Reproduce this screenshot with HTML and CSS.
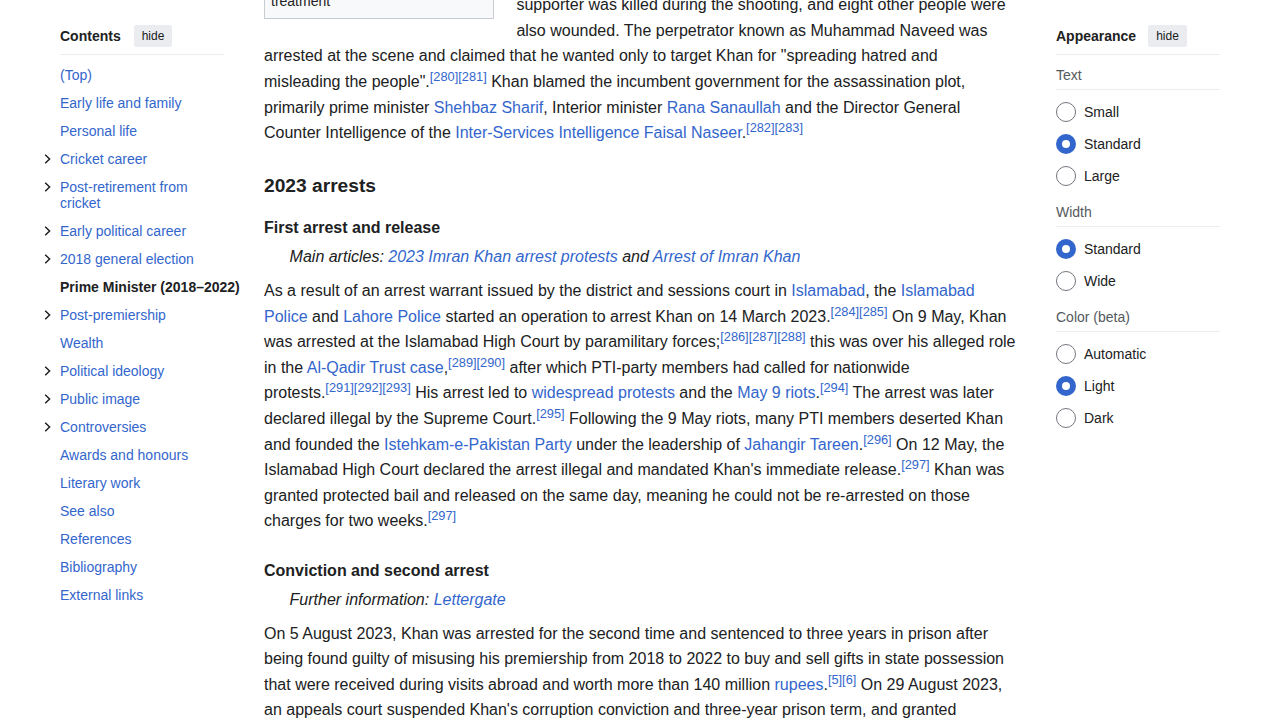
FILE: index.html
```html
<!DOCTYPE html>
<html lang="en">
<head>
<meta charset="utf-8">
<title>Imran Khan - Wikipedia</title>
<link rel="stylesheet" href="styles.css">
</head>
<body>
<div class="page">
  <nav class="toc">
    <div class="panel-head">
      <span class="panel-title">Contents</span>
      <button class="hide-btn">hide</button>
    </div>
    <ul class="toc-list">
      <li class="toc-item"><a href="#">(Top)</a></li>
      <li class="toc-item"><a href="#">Early life and family</a></li>
      <li class="toc-item"><a href="#">Personal life</a></li>
      <li class="toc-item"><span class="toggle"><svg width="8" height="10" viewBox="0 0 8 10"><polyline points="1.2,0.8 5.6,5 1.2,9.2"/></svg></span><a href="#">Cricket career</a></li>
      <li class="toc-item"><span class="toggle"><svg width="8" height="10" viewBox="0 0 8 10"><polyline points="1.2,0.8 5.6,5 1.2,9.2"/></svg></span><a href="#">Post-retirement from cricket</a></li>
      <li class="toc-item"><span class="toggle"><svg width="8" height="10" viewBox="0 0 8 10"><polyline points="1.2,0.8 5.6,5 1.2,9.2"/></svg></span><a href="#">Early political career</a></li>
      <li class="toc-item"><span class="toggle"><svg width="8" height="10" viewBox="0 0 8 10"><polyline points="1.2,0.8 5.6,5 1.2,9.2"/></svg></span><a href="#">2018 general election</a></li>
      <li class="toc-item toc-active"><a href="#">Prime Minister (2018–2022)</a></li>
      <li class="toc-item"><span class="toggle"><svg width="8" height="10" viewBox="0 0 8 10"><polyline points="1.2,0.8 5.6,5 1.2,9.2"/></svg></span><a href="#">Post-premiership</a></li>
      <li class="toc-item"><a href="#">Wealth</a></li>
      <li class="toc-item"><span class="toggle"><svg width="8" height="10" viewBox="0 0 8 10"><polyline points="1.2,0.8 5.6,5 1.2,9.2"/></svg></span><a href="#">Political ideology</a></li>
      <li class="toc-item"><span class="toggle"><svg width="8" height="10" viewBox="0 0 8 10"><polyline points="1.2,0.8 5.6,5 1.2,9.2"/></svg></span><a href="#">Public image</a></li>
      <li class="toc-item"><span class="toggle"><svg width="8" height="10" viewBox="0 0 8 10"><polyline points="1.2,0.8 5.6,5 1.2,9.2"/></svg></span><a href="#">Controversies</a></li>
      <li class="toc-item"><a href="#">Awards and honours</a></li>
      <li class="toc-item"><a href="#">Literary work</a></li>
      <li class="toc-item"><a href="#">See also</a></li>
      <li class="toc-item"><a href="#">References</a></li>
      <li class="toc-item"><a href="#">Bibliography</a></li>
      <li class="toc-item"><a href="#">External links</a></li>
    </ul>
  </nav>

  <main class="content">
    <div class="thumb">
      <div class="thumbcaption">Khan being taken to hospital for treatment</div>
    </div>
    <p>supporter was killed during the shooting, and eight other people were also wounded. The perpetrator known as Muhammad Naveed was arrested at the scene and claimed that he wanted only to target Khan for "spreading hatred and misleading the <span class="nb">people".<sup class="ref">[280]</sup><sup class="ref">[281]</sup></span> Khan blamed the incumbent government for the assassination plot, primarily prime minister <a href="#">Shehbaz Sharif</a>, Interior minister <a href="#">Rana Sanaullah</a> and the Director General Counter Intelligence of the <a href="#">Inter-Services Intelligence</a> <a href="#">Faisal</a> <span class="nb"><a href="#">Naseer</a>.<sup class="ref">[282]</sup><sup class="ref">[283]</sup></span></p>

    <h3 class="h3">2023 arrests</h3>
    <h4 class="h4">First arrest and release</h4>
    <div class="hatnote">Main articles: <a href="#">2023 Imran Khan arrest protests</a> and <a href="#">Arrest of Imran Khan</a></div>
    <p>As a result of an arrest warrant issued by the district and sessions court in <a href="#">Islamabad</a>, the <a href="#">Islamabad Police</a> and <a href="#">Lahore Police</a> started an operation to arrest Khan on 14 March <span class="nb">2023.<sup class="ref">[284]</sup><sup class="ref">[285]</sup></span> On 9 May, Khan was arrested at the Islamabad High Court by paramilitary <span class="nb">forces;<sup class="ref">[286]</sup><sup class="ref">[287]</sup><sup class="ref">[288]</sup></span> this was over his alleged role in the <a href="#">Al-Qadir Trust</a> <span class="nb"><a href="#">case</a>,<sup class="ref">[289]</sup><sup class="ref">[290]</sup></span> after which PTI-party members had called for nationwide <span class="nb">protests.<sup class="ref">[291]</sup><sup class="ref">[292]</sup><sup class="ref">[293]</sup></span> His arrest led to <a href="#">widespread protests</a> and the <a href="#">May 9</a> <span class="nb"><a href="#">riots</a>.<sup class="ref">[294]</sup></span> The arrest was later declared illegal by the Supreme <span class="nb">Court.<sup class="ref">[295]</sup></span> Following the 9 May riots, many PTI members deserted Khan and founded the <a href="#">Istehkam-e-Pakistan Party</a> under the leadership of <a href="#">Jahangir</a> <span class="nb"><a href="#">Tareen</a>.<sup class="ref">[296]</sup></span> On 12 May, the Islamabad High Court declared the arrest illegal and mandated Khan's immediate <span class="nb">release.<sup class="ref">[297]</sup></span> Khan was granted protected bail and released on the same day, meaning he could not be re-arrested on those charges for two <span class="nb">weeks.<sup class="ref">[297]</sup></span></p>

    <h4 class="h4">Conviction and second arrest</h4>
    <div class="hatnote">Further information: <a href="#">Lettergate</a></div>
    <p>On 5 August 2023, Khan was arrested for the second time and sentenced to three years in prison after being found guilty of misusing his premiership from 2018 to 2022 to buy and sell gifts in state possession that were received during visits abroad and worth more than 140 million <span class="nb"><a href="#">rupees</a>.<sup class="ref">[5]</sup><sup class="ref">[6]</sup></span> On 29 August 2023, an appeals court suspended Khan's corruption conviction and three-year prison term, and granted conditional bail, but he remained in jail on other charges pending against him.</p>
  </main>

  <aside class="appearance">
    <div class="panel-head panel-head-right">
      <span class="panel-title">Appearance</span>
      <button class="hide-btn">hide</button>
    </div>
    <div class="app-label">Text</div>
    <div class="radio-list">
      <div class="radio-row"><span class="radio"></span><span>Small</span></div>
      <div class="radio-row"><span class="radio radio-on"></span><span>Standard</span></div>
      <div class="radio-row"><span class="radio"></span><span>Large</span></div>
    </div>
    <div class="app-label">Width</div>
    <div class="radio-list">
      <div class="radio-row"><span class="radio radio-on"></span><span>Standard</span></div>
      <div class="radio-row"><span class="radio"></span><span>Wide</span></div>
    </div>
    <div class="app-label">Color (beta)</div>
    <div class="radio-list">
      <div class="radio-row"><span class="radio"></span><span>Automatic</span></div>
      <div class="radio-row"><span class="radio radio-on"></span><span>Light</span></div>
      <div class="radio-row"><span class="radio"></span><span>Dark</span></div>
    </div>
  </aside>
</div>
</body>
</html>
```
FILE: styles.css
```css
* { box-sizing: border-box; }

html, body {
  margin: 0;
  padding: 0;
  background: #ffffff;
}

body {
  font-family: "Liberation Sans", Arial, sans-serif;
  color: #202122;
  height: 720px;
  overflow: hidden;
}

a {
  color: #3366cc;
  text-decoration: none;
}

.page {
  display: flex;
  align-items: flex-start;
  gap: 40px;
  padding-left: 60px;
}

/* ---------- side panels ---------- */
.toc,
.appearance {
  width: 164px;
  flex: none;
  padding-top: 25px;
}

.panel-head {
  display: flex;
  align-items: center;
  gap: 13px;
  padding-bottom: 7px;
  border-bottom: 1px solid #eaecf0;
}

.panel-head-right {
  gap: 12px;
}

.panel-title {
  font-size: 14px;
  font-weight: bold;
  line-height: 20px;
}

.hide-btn {
  height: 22px;
  line-height: 22px;
  padding: 0 8px;
  border: 0;
  border-radius: 2px;
  background: #eaecf0;
  color: #202122;
  font-family: inherit;
  font-size: 12px;
}

/* ---------- table of contents ---------- */
.toc-list {
  list-style: none;
  margin: 0;
  padding: 6px 0 0;
}

.toc-item {
  position: relative;
  padding: 6px 0;
  font-size: 14px;
  line-height: 16px;
}

.toc-active a {
  color: #202122;
  font-weight: bold;
  white-space: nowrap;
}

.toggle {
  position: absolute;
  left: -16px;
  top: 9px;
  width: 8px;
  height: 10px;
  display: block;
}

.toggle svg {
  display: block;
}

.toggle polyline {
  fill: none;
  stroke: #202122;
  stroke-width: 1.5;
}

/* ---------- article ---------- */
.content {
  width: 752px;
  flex: none;
  margin-top: -15.8px;
  font-size: 16px;
  line-height: 1.6;
}

.content p {
  margin: 8px 0;
}

.nb {
  white-space: nowrap;
}

.thumb {
  float: left;
  width: 230px;
  margin: -18.4px 22.4px 20.8px 0;
  padding: 3px;
  border: 1px solid #c8ccd1;
  background: #f8f9fa;
}

.thumbcaption {
  padding: 3px;
  font-size: 14px;
  line-height: 1.4;
}

.ref {
  font-size: 80%;
  line-height: 1;
  vertical-align: super;
  color: #3366cc;
}

.h3 {
  margin: 25.2px 0 0;
  font-size: 19.2px;
  font-weight: bold;
  line-height: 1.6;
}

.h4 {
  margin: 24px 0 0;
  font-size: 16px;
  font-weight: bold;
  line-height: 1.6;
}

.h3 + .h4 {
  margin-top: 13.6px;
}

.hatnote {
  margin: 3.5px 0 8px;
  padding-left: 25.6px;
  font-style: italic;
}

/* ---------- appearance panel ---------- */
.app-label {
  margin-top: 10px;
  padding-bottom: 4px;
  border-bottom: 1px solid #eaecf0;
  color: #54595d;
  font-size: 14px;
  line-height: 20px;
}

.radio-list {
  padding-top: 6px;
}

.radio-row {
  display: flex;
  align-items: center;
  gap: 8px;
  height: 32px;
  font-size: 14px;
}

.radio {
  width: 20px;
  height: 20px;
  flex: none;
  border-radius: 50%;
  border: 1px solid #72777d;
  background: #ffffff;
}

.radio-on {
  border: 6px solid #3366cc;
}
```
